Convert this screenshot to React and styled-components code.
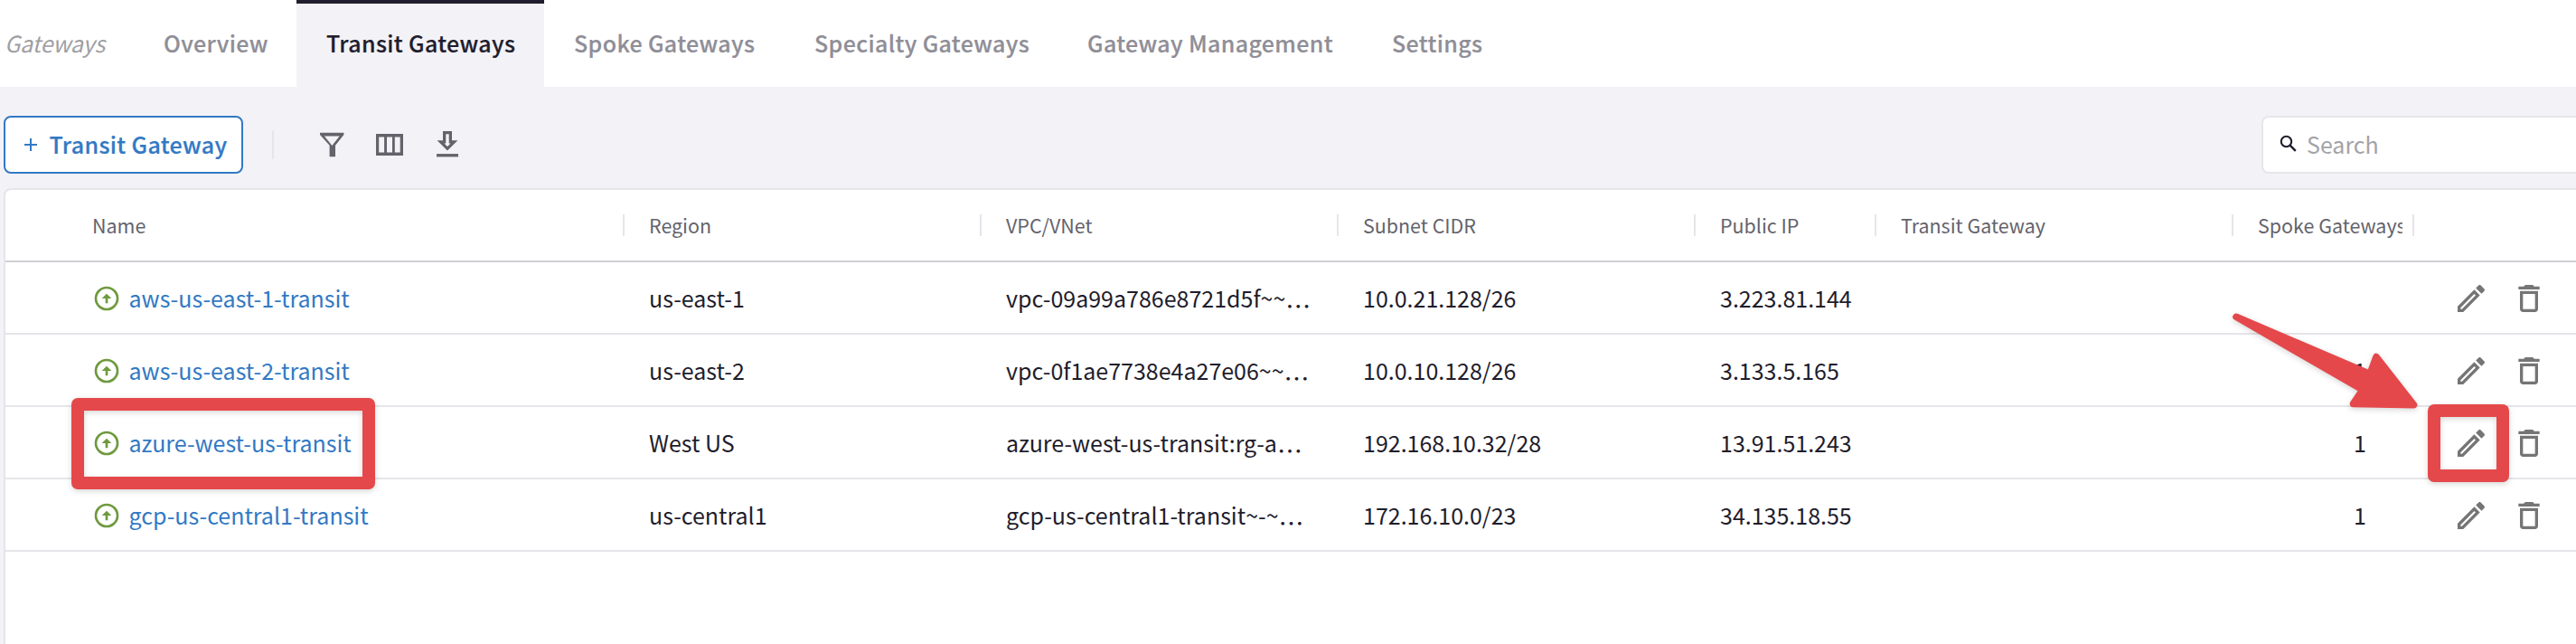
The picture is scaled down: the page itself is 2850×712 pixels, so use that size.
import React from 'react';
import styled, { createGlobalStyle } from 'styled-components';

const GlobalStyle = createGlobalStyle`
  *, *::before, *::after { box-sizing: border-box; }
  body { margin: 0; overflow: hidden; background: #f3f2f7; }
`;

const Page = styled.div`
  position: relative;
  display: flex;
  flex-direction: column;
  width: 2850px;
  height: 712px;
  overflow: hidden;
  background: #f3f2f7;
  color: #1f1d2c;
  font-family: 'Noto Sans CJK JP', 'Noto Sans', sans-serif;
  font-size: 25px;
  line-height: 36px;
  white-space: nowrap;
`;

const TabBar = styled.nav`
  display: flex;
  flex: none;
  height: 96px;
  background: #fff;
`;

const Section = styled.span`
  display: flex;
  align-items: center;
  width: 148px;
  padding: 0 0 2px 5px;
  color: #a09fa3;
  font-style: italic;
  letter-spacing: -0.2px;
`;

const Tab = styled.a`
  display: flex;
  align-items: center;
  width: ${(p) => p.$width}px;
  padding: 0 0 2px 33px;
  font-weight: 500;
  letter-spacing: 0.35px;
  -webkit-text-stroke: 0.2px currentColor;
  color: ${(p) => (p.$active ? '#1f1d2e' : '#8f8e97')};
  background: ${(p) => (p.$active ? '#f3f2f7' : 'transparent')};
  box-shadow: ${(p) => (p.$active ? 'inset 0 4px 0 #1f1d2e' : 'none')};
`;

const Toolbar = styled.div`
  display: flex;
  flex: none;
  align-items: center;
  height: 64px;
  margin: 32px 0 16px;
  padding-left: 4px;
`;

const AddButton = styled.button`
  display: flex;
  align-items: center;
  gap: 12.5px;
  width: 265px;
  height: 64px;
  padding: 0 0 0 20px;
  border: 2px solid #3279c4;
  border-radius: 8px;
  background: #fff;
  color: #3279c4;
  font: inherit;
  font-weight: 500;
  letter-spacing: 0.35px;
  -webkit-text-stroke: 0.2px currentColor;
`;

const ButtonLabel = styled.span`
  padding-bottom: 2px;
`;

const Divider = styled.span`
  width: 2px;
  height: 32px;
  margin-left: 32px;
  background: #e6e5ea;
`;

const ToolIcons = styled.div`
  display: flex;
  gap: 32px;
  margin-left: 48px;
  color: #64636b;
`;

const SearchBox = styled.label`
  display: flex;
  align-items: center;
  gap: 8px;
  width: 348px;
  height: 64px;
  margin-left: auto;
  padding: 0 0 2px 16px;
  border: 2px solid #e6e5ea;
  border-right: 0;
  border-radius: 8px 0 0 8px;
  background: #fff;
  color: #a3a3a6;
`;

const Glyph = styled.svg`
  display: block;
  flex: none;
  width: ${(p) => p.$size}px;
  height: ${(p) => p.$size}px;
  margin-top: ${(p) => p.$drop || 0}px;
`;

const Table = styled.div`
  flex: 1;
  margin-left: 4px;
  border: 2px solid #e6e5ea;
  border-right: 0;
  border-bottom: 0;
  border-radius: 8px 0 0 0;
  background: #fff;
`;

const Row = styled.div`
  display: grid;
  grid-template-columns: 685px 395px 395px 395px 200px 395px 200px 1fr;
  height: 80px;
  border-bottom: 2px solid #e5e5ea;
`;

const HeaderRow = styled(Row)`
  border-bottom-color: #d0d0d8;
  color: #64636c;
  font-size: 21.45px;
`;

const HeaderCell = styled.div`
  display: flex;
  align-items: center;
  justify-content: space-between;
  padding-left: ${(p) => (p.$first ? 96 : 27)}px;

  &::after {
    content: '';
    width: 2px;
    height: 24px;
    background: #e6e5ea;
  }

  &:last-child::after { display: none; }
`;

const HeaderLabel = styled.span`
  max-width: ${(p) => (p.$clip ? '160px' : 'none')};
  overflow: hidden;
`;

const Cell = styled.div`
  display: flex;
  align-items: center;
  padding-left: 27px;
`;

const NameCell = styled(Cell)`
  gap: 8.5px;
  padding-left: 96px;
  color: #3279c4;
`;

const CountCell = styled(Cell)`
  justify-content: flex-end;
  padding-right: 53px;
`;

const ActionCell = styled(Cell)`
  gap: 24px;
  padding-left: 43px;
  color: #757575;
`;

const Ellipsis = styled.span`
  font-size: 28px;
  line-height: 1;
  transform: translateY(9px);
`;

const Highlight = styled.div`
  position: absolute;
  left: ${(p) => p.$x}px;
  top: ${(p) => p.$y}px;
  width: ${(p) => p.$w}px;
  height: ${(p) => p.$h}px;
  border: 14px solid #e5484b;
  border-radius: 7px;
  filter: drop-shadow(0 2px 3px rgba(0, 0, 0, 0.16));
`;

const Arrow = styled.svg`
  position: absolute;
  left: 2460px;
  top: 336px;
  width: 226px;
  height: 126px;
  filter: drop-shadow(0 2px 3px rgba(0, 0, 0, 0.16));
`;

const PlusIcon = () => (
  <Glyph $size={16} viewBox="0 0 16 16">
    <path d="M8 1v14M1 8h14" stroke="currentColor" strokeWidth="2" />
  </Glyph>
);

const FilterIcon = () => (
  <Glyph $size={32} viewBox="0 0 32 32" fill="currentColor" fillRule="evenodd">
    <path d="M3 2.8h26.4V5L20 16.8V29.2h-6.4V16.8L3 5zM7.9 6.4L16.4 17 24.6 6.4z" />
  </Glyph>
);

const ColumnsIcon = () => (
  <Glyph $size={32} viewBox="0 0 32 32" fill="currentColor" fillRule="evenodd">
    <path d="M1 4h30v24H1zM4.2 7.6v17h5.9v-17zM13 7.6v17h6v-17zM21.8 7.6v17h5.9v-17z" />
  </Glyph>
);

const DownloadIcon = () => (
  <Glyph $size={32} viewBox="0 0 32 32" fill="currentColor" fillRule="evenodd">
    <path d="M11 1h10v10.3h6.4L16 22.4 4.6 11.3H11zM14.3 4.3v10.3h-1.8L16 17.9l3.5-3.3h-1.8V4.3z" />
    <path d="M4 26.1h24v3.3H4z" />
  </Glyph>
);

const SearchIcon = () => (
  <Glyph $size={24} viewBox="0 0 24 24" fill="none" stroke="#1f1d2c" strokeWidth="2.1">
    <circle cx="9.5" cy="9.5" r="5.7" />
    <path d="M13.6 13.6l6.2 6.2" strokeWidth="2.4" />
  </Glyph>
);

const StatusUpIcon = () => (
  <Glyph $size={32} $drop={2} viewBox="0 0 24 24">
    <circle cx="12" cy="12" r="9" fill="none" stroke="#6f9a3e" strokeWidth="2" />
    <path d="M12 8l4 4h-3v4h-2v-4H8z" fill="#6f9a3e" />
  </Glyph>
);

const EditIcon = () => (
  <Glyph $size={40} $drop={2} viewBox="0 0 24 24" fill="currentColor">
    <path d="M14.06 9.02l.92.92L5.92 19H5v-.92l9.06-9.06M17.66 3c-.25 0-.51.1-.7.29l-1.83 1.83 3.75 3.75 1.83-1.83c.39-.39.39-1.02 0-1.41l-2.34-2.34c-.2-.2-.45-.29-.71-.29zm-3.6 3.19L3 17.25V21h3.75L17.81 9.94l-3.75-3.75z" />
  </Glyph>
);

const TrashIcon = () => (
  <Glyph $size={40} $drop={2} viewBox="0 0 24 24" fill="currentColor">
    <path d="M6 19c0 1.1.9 2 2 2h8c1.1 0 2-.9 2-2V7H6v12zM8 9h8v10H8V9zm7.5-5l-1-1h-5l-1 1H5v2h14V4z" />
  </Glyph>
);

const tabs = [
  { label: 'Overview', width: 180 },
  { label: 'Transit Gateways', width: 274, active: true },
  { label: 'Spoke Gateways', width: 266 },
  { label: 'Specialty Gateways', width: 302 },
  { label: 'Gateway Management', width: 337 },
  { label: 'Settings', width: 164 },
];

const columns = ['Name', 'Region', 'VPC/VNet', 'Subnet CIDR', 'Public IP', 'Transit Gateway', 'Spoke Gateways'];

const gateways = [
  { name: 'aws-us-east-1-transit', region: 'us-east-1', vpc: 'vpc-09a99a786e8721d5f~~', cidr: '10.0.21.128/26', ip: '3.223.81.144', spokes: '' },
  { name: 'aws-us-east-2-transit', region: 'us-east-2', vpc: 'vpc-0f1ae7738e4a27e06~~', cidr: '10.0.10.128/26', ip: '3.133.5.165', spokes: '1' },
  { name: 'azure-west-us-transit', region: 'West US', vpc: 'azure-west-us-transit:rg-a', cidr: '192.168.10.32/28', ip: '13.91.51.243', spokes: '1' },
  { name: 'gcp-us-central1-transit', region: 'us-central1', vpc: 'gcp-us-central1-transit~-~', cidr: '172.16.10.0/23', ip: '34.135.18.55', spokes: '1' },
];

export default function App() {
  return (
    <Page>
      <GlobalStyle />
      <TabBar>
        <Section>Gateways</Section>
        {tabs.map((t) => (
          <Tab key={t.label} $width={t.width} $active={t.active}>{t.label}</Tab>
        ))}
      </TabBar>

      <Toolbar>
        <AddButton>
          <PlusIcon />
          <ButtonLabel>Transit Gateway</ButtonLabel>
        </AddButton>
        <Divider />
        <ToolIcons>
          <FilterIcon />
          <ColumnsIcon />
          <DownloadIcon />
        </ToolIcons>
        <SearchBox>
          <SearchIcon />
          <span>Search</span>
        </SearchBox>
      </Toolbar>

      <Table>
        <HeaderRow>
          {columns.map((c, i) => (
            <HeaderCell key={c} $first={i === 0}>
              <HeaderLabel $clip={i === 6}>{c}</HeaderLabel>
            </HeaderCell>
          ))}
          <HeaderCell />
        </HeaderRow>
        {gateways.map((g) => (
          <Row key={g.name}>
            <NameCell>
              <StatusUpIcon />
              <span>{g.name}</span>
            </NameCell>
            <Cell>{g.region}</Cell>
            <Cell>
              <span>{g.vpc}</span>
              <Ellipsis>…</Ellipsis>
            </Cell>
            <Cell>{g.cidr}</Cell>
            <Cell>{g.ip}</Cell>
            <Cell />
            <CountCell>{g.spokes}</CountCell>
            <ActionCell>
              <EditIcon />
              <TrashIcon />
            </ActionCell>
          </Row>
        ))}
      </Table>

      <Highlight $x={79} $y={440} $w={336} $h={101} />
      <Highlight $x={2686} $y={447} $w={90} $h={86} />
      <Arrow viewBox="2460 336 226 126">
        <path
          d="M2474 350.3L2622 413.5 2629 394.5 2670.5 447.7 2603.5 446.5 2614 431Z"
          fill="#e5484b"
          stroke="#e5484b"
          strokeWidth="7.6"
          strokeLinejoin="round"
        />
      </Arrow>
    </Page>
  );
}
